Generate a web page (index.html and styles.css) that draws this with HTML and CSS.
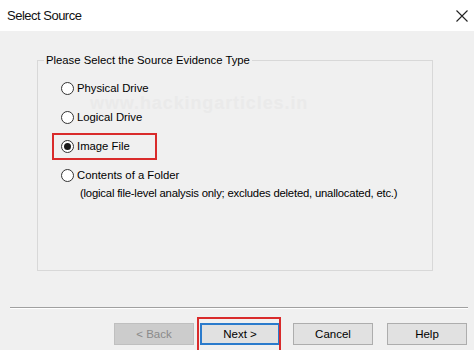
FILE: index.html
```html
<!DOCTYPE html>
<html>
<head>
<meta charset="utf-8">
<link rel="stylesheet" href="styles.css">
</head>
<body>
<div class="window">
  <div class="titlebar">
    <span class="title">Select Source</span>
    <svg class="close" width="12" height="12" viewBox="0 0 12 12"><path d="M0.5 0.5 L11.5 11.5 M11.5 0.5 L0.5 11.5" stroke="#222" stroke-width="1.1" fill="none"/></svg>
  </div>
  <div class="body">
    <div class="watermark">www.hackingarticles.in</div>
    <fieldset class="group">
      <legend class="legend">Please Select the Source Evidence Type</legend>
      <div class="options">
        <label class="opt"><span class="radio"></span><span>Physical Drive</span></label>
        <label class="opt"><span class="radio"></span><span>Logical Drive</span></label>
        <label class="opt"><span class="radio checked"></span><span>Image File</span><span class="redbox"></span></label>
        <label class="opt"><span class="radio"></span><span>Contents of a Folder</span></label>
        <div class="note">(logical file-level analysis only; excludes deleted, unallocated, etc.)</div>
      </div>
    </fieldset>
    <div class="sep"></div>
    <div class="buttons">
      <button class="btn disabled">&lt; Back</button>
      <button class="btn default">Next &gt;<span class="redbox2"></span></button>
      <button class="btn gap">Cancel</button>
      <button class="btn gap2">Help</button>
    </div>
  </div>
</div>
</body>
</html>
```
FILE: styles.css
```css
html, body {
  margin: 0;
  padding: 0;
}
body {
  width: 474px;
  height: 350px;
  overflow: hidden;
  background: #f0f0f0;
  font-family: "Liberation Sans", Arial, sans-serif;
  font-size: 11.3px;
  color: #000;
}
.window {
  width: 474px;
  height: 350px;
  display: flex;
  flex-direction: column;
}
.titlebar {
  height: 31px;
  background: #fff;
  display: flex;
  align-items: center;
  justify-content: space-between;
  padding: 0 6px 0 7px;
  flex: none;
}
.title {
  font-size: 13px;
  color: #111;
  letter-spacing: -0.5px;
}
.close {
  display: block;
}
.body {
  position: relative;
  flex: 1;
  background: #f0f0f0;
  padding-top: 22px;
}
.watermark {
  position: absolute;
  left: 90px;
  top: 64px;
  font-size: 18px;
  line-height: 16px;
  font-weight: bold;
  color: #eaeaea;
  letter-spacing: 0.9px;
}
.group {
  position: relative;
  margin: 0 0 0 37px;
  width: 396px;
  height: 218px;
  box-sizing: border-box;
  border: 1px solid #d8d8d8;
  padding: 0;
  min-width: 0;
}
.legend {
  padding: 0 2px;
  margin-left: 6px;
  line-height: 14px;
}
.options {
  display: flex;
  flex-direction: column;
  align-items: flex-start;
  padding: 14px 0 0 23px;
}
.opt {
  position: relative;
  display: flex;
  align-items: center;
  gap: 3px;
  height: 14px;
  margin-bottom: 15px;
  white-space: nowrap;
}
.radio {
  width: 11px;
  height: 11px;
  border: 1px solid #333;
  border-radius: 50%;
  background: #fff;
  display: flex;
  align-items: center;
  justify-content: center;
  flex: none;
}
.radio.checked::after {
  content: "";
  width: 7px;
  height: 7px;
  border-radius: 50%;
  background: #1a1a1a;
}
.redbox {
  position: absolute;
  left: -9px;
  top: -6px;
  width: 101px;
  height: 23px;
  border: 2px solid #d92b2b;
}
.note {
  margin: -10px 0 0 19px;
  white-space: nowrap;
  letter-spacing: -0.2px;
}
.sep {
  margin: 36px 6px 0 10px;
  height: 1px;
  background: #a0a0a0;
  border-bottom: 1px solid #fff;
}
.buttons {
  display: flex;
  padding: 14px 0 0 114px;
}
.btn {
  position: relative;
  width: 80px;
  height: 22px;
  box-sizing: border-box;
  background: #e1e1e1;
  border: 1px solid #adadad;
  font-family: "Liberation Sans", Arial, sans-serif;
  font-size: 11.5px;
  color: #000;
  padding: 0;
  margin: 0;
}
.btn.disabled {
  background: #cccccc;
  border-color: #bfbfbf;
  color: #8a8a8a;
}
.btn.default {
  margin-left: 6px;
  border: 2px solid #2b7bcc;
}
.btn.gap {
  margin-left: 13px;
}
.btn.gap2 {
  margin-left: 14px;
}
.redbox2 {
  position: absolute;
  left: -5px;
  top: -8px;
  right: -3px;
  bottom: -12px;
  border: 2px solid #d92b2b;
}
```
